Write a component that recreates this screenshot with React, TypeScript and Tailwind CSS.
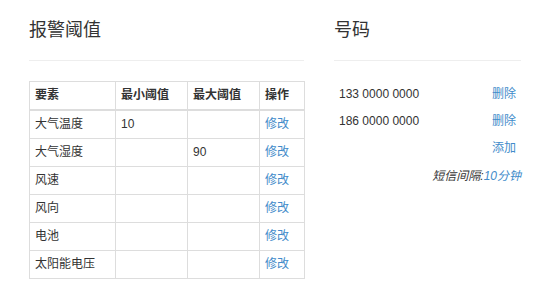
const rows = [
  { name: '大气温度', min: '10', max: '' },
  { name: '大气湿度', min: '', max: '90' },
  { name: '风速', min: '', max: '' },
  { name: '风向', min: '', max: '' },
  { name: '电池', min: '', max: '' },
  { name: '太阳能电压', min: '', max: '' },
]

const phones = ['133 0000 0000', '186 0000 0000']

const cell = 'border border-[#ddd] px-[5px] py-[5px] leading-[17px] text-left align-top'

export default function App() {
  return (
    <div
      className="flex gap-[30px] pl-[29px] bg-white text-[#333] text-[12px] min-h-[291px]"
      style={{ fontFamily: '"Liberation Sans", "Noto Sans CJK SC", sans-serif' }}
    >
      {/* Thresholds */}
      <div className="w-[275px]">
        <h3 className="pt-[20px] text-[18px] leading-[20px] font-normal">报警阈值</h3>
        <hr className="mt-[20px] border-t border-[#eee]" />
        <table className="mt-[20px] w-[275px] border-collapse table-fixed">
          <colgroup>
            <col className="w-[86px]" />
            <col className="w-[72px]" />
            <col className="w-[72px]" />
            <col className="w-[45px]" />
          </colgroup>
          <thead>
            <tr>
              <th className={`${cell} font-bold border-b-2`}>要素</th>
              <th className={`${cell} font-bold border-b-2`}>最小阈值</th>
              <th className={`${cell} font-bold border-b-2`}>最大阈值</th>
              <th className={`${cell} font-bold border-b-2`}>操作</th>
            </tr>
          </thead>
          <tbody>
            {rows.map((r) => (
              <tr key={r.name}>
                <td className={cell}>{r.name}</td>
                <td className={cell}>{r.min}</td>
                <td className={cell}>{r.max}</td>
                <td className={cell}>
                  <a className="text-[#428bca]">修改</a>
                </td>
              </tr>
            ))}
          </tbody>
        </table>
      </div>

      {/* Phone numbers */}
      <div className="w-[187px]">
        <h3 className="pt-[20px] text-[18px] leading-[20px] font-normal">号码</h3>
        <hr className="mt-[20px] border-t border-[#eee]" />
        <div className="mt-[20px]">
          {phones.map((p) => (
            <div key={p} className="flex justify-between px-[5px] py-[5px] leading-[17px]">
              <span>{p}</span>
              <a className="text-[#428bca]">删除</a>
            </div>
          ))}
          <div className="flex justify-end px-[5px] py-[5px] leading-[17px]">
            <a className="text-[#428bca]">添加</a>
          </div>
        </div>
        <p className="mt-[6px] text-right italic leading-[17px]">
          短信间隔:<span className="text-[#428bca]">10分钟</span>
        </p>
      </div>
    </div>
  )
}
